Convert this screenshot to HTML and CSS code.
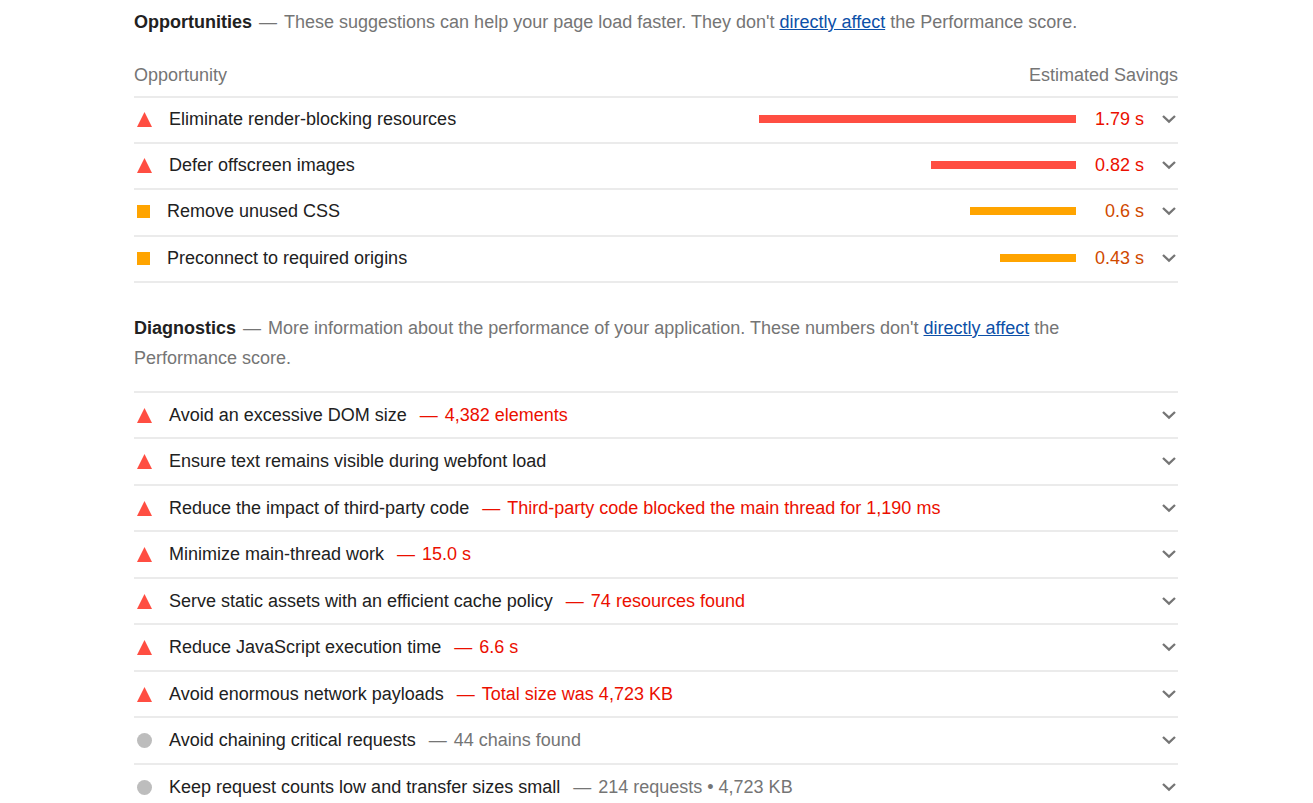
FILE: index.html
```html
<!DOCTYPE html>
<html lang="en">
<head>
<meta charset="utf-8">
<title>Performance audits</title>
<link rel="stylesheet" href="styles.css">
</head>
<body>
<svg width="0" height="0" class="defs" aria-hidden="true">
  <symbol id="chevron" viewBox="0 0 14 10"><path d="M1 2 L7 7.7 L13 2" fill="none" stroke="#757575" stroke-width="2.3"/></symbol>
  <symbol id="fail" viewBox="0 0 15 15"><path d="M7.5 0 L15 15 H0 Z" fill="#ff4e42"/></symbol>
  <symbol id="average" viewBox="0 0 13 13"><path d="M0 0 H13 V13 H0 Z" fill="#ffa400"/></symbol>
  <symbol id="info" viewBox="0 0 15 15"><circle cx="7.5" cy="7.5" r="7.5" fill="#bdbdbd"/></symbol>
</svg>
<main class="report">
  <section class="group">
    <p class="intro"><strong class="group-title">Opportunities</strong><span class="dash">—</span>These suggestions can help your page load faster. They don't <a href="#score">directly affect</a> the Performance score.</p>
    <div class="columns"><span>Opportunity</span><span>Estimated Savings</span></div>
    <ul class="audits opportunities">
      <li><button type="button" class="audit fail" aria-expanded="false"><svg class="mark"><use href="#fail"/></svg><span class="title">Eliminate render-blocking resources</span><span class="track"><span class="bar" style="width:100%"></span></span><span class="savings">1.79 s</span><svg class="chevron"><use href="#chevron"/></svg></button></li>
      <li><button type="button" class="audit fail" aria-expanded="false"><svg class="mark"><use href="#fail"/></svg><span class="title">Defer offscreen images</span><span class="track"><span class="bar" style="width:45.8%"></span></span><span class="savings">0.82 s</span><svg class="chevron"><use href="#chevron"/></svg></button></li>
      <li><button type="button" class="audit average" aria-expanded="false"><svg class="mark"><use href="#average"/></svg><span class="title">Remove unused CSS</span><span class="track"><span class="bar" style="width:33.5%"></span></span><span class="savings">0.6 s</span><svg class="chevron"><use href="#chevron"/></svg></button></li>
      <li><button type="button" class="audit average" aria-expanded="false"><svg class="mark"><use href="#average"/></svg><span class="title">Preconnect to required origins</span><span class="track"><span class="bar" style="width:24%"></span></span><span class="savings">0.43 s</span><svg class="chevron"><use href="#chevron"/></svg></button></li>
    </ul>
  </section>
  <section class="group">
    <p class="intro"><strong class="group-title">Diagnostics</strong><span class="dash">—</span>More information about the performance of your application. These numbers don't <a href="#score">directly affect</a> the Performance score.</p>
    <ul class="audits diagnostics">
      <li><button type="button" class="audit fail" aria-expanded="false"><svg class="mark"><use href="#fail"/></svg><span class="title">Avoid an excessive DOM size<span class="detail"><span class="detail-dash">—</span>4,382 elements</span></span><svg class="chevron"><use href="#chevron"/></svg></button></li>
      <li><button type="button" class="audit fail" aria-expanded="false"><svg class="mark"><use href="#fail"/></svg><span class="title">Ensure text remains visible during webfont load</span><svg class="chevron"><use href="#chevron"/></svg></button></li>
      <li><button type="button" class="audit fail" aria-expanded="false"><svg class="mark"><use href="#fail"/></svg><span class="title">Reduce the impact of third-party code<span class="detail"><span class="detail-dash">—</span>Third-party code blocked the main thread for 1,190 ms</span></span><svg class="chevron"><use href="#chevron"/></svg></button></li>
      <li><button type="button" class="audit fail" aria-expanded="false"><svg class="mark"><use href="#fail"/></svg><span class="title">Minimize main-thread work<span class="detail"><span class="detail-dash">—</span>15.0 s</span></span><svg class="chevron"><use href="#chevron"/></svg></button></li>
      <li><button type="button" class="audit fail" aria-expanded="false"><svg class="mark"><use href="#fail"/></svg><span class="title">Serve static assets with an efficient cache policy<span class="detail"><span class="detail-dash">—</span>74 resources found</span></span><svg class="chevron"><use href="#chevron"/></svg></button></li>
      <li><button type="button" class="audit fail" aria-expanded="false"><svg class="mark"><use href="#fail"/></svg><span class="title">Reduce JavaScript execution time<span class="detail"><span class="detail-dash">—</span>6.6 s</span></span><svg class="chevron"><use href="#chevron"/></svg></button></li>
      <li><button type="button" class="audit fail" aria-expanded="false"><svg class="mark"><use href="#fail"/></svg><span class="title">Avoid enormous network payloads<span class="detail"><span class="detail-dash">—</span>Total size was 4,723 KB</span></span><svg class="chevron"><use href="#chevron"/></svg></button></li>
      <li><button type="button" class="audit info" aria-expanded="false"><svg class="mark"><use href="#info"/></svg><span class="title">Avoid chaining critical requests<span class="detail"><span class="detail-dash">—</span>44 chains found</span></span><svg class="chevron"><use href="#chevron"/></svg></button></li>
      <li><button type="button" class="audit info" aria-expanded="false"><svg class="mark"><use href="#info"/></svg><span class="title">Keep request counts low and transfer sizes small<span class="detail"><span class="detail-dash">—</span>214 requests • 4,723 KB</span></span><svg class="chevron"><use href="#chevron"/></svg></button></li>
    </ul>
  </section>
</main>
</body>
</html>
```
FILE: styles.css
```css
* { box-sizing: border-box; }
html { overflow-x: hidden; scrollbar-width: none; }
body {
  margin: 0;
  background: #fff;
  color: #212121;
  font: 18px/30px "Liberation Sans", Arial, sans-serif;
}
.defs { position: absolute; }
.report { padding: 7px 135px 0 134px; }
.group { margin-bottom: 30px; }
.intro { margin: 0; padding-right: 16px; color: #757575; }
.group-title { color: #212121; }
.dash { margin: 0 7px; }
a { color: #0c50a8; text-decoration: underline; }
.columns {
  display: flex;
  justify-content: space-between;
  margin-top: 23px;
  color: #757575;
}
.audits {
  list-style: none;
  margin: 6px 0 0;
  padding: 0;
  border-top: 2px solid #ebebeb;
}
.diagnostics { margin-top: 18px; }
.audits li { height: 46px; border-bottom: 2px solid #ebebeb; }
.opportunities li:nth-child(3),
.diagnostics li:nth-child(even) { height: 47px; }
.audit {
  display: flex;
  align-items: center;
  width: 100%;
  padding: 6px 2px 7px 3px;
  border: 0;
  background: none;
  color: inherit;
  font: inherit;
  text-align: left;
  cursor: pointer;
}
.diagnostics .audit { padding-top: 7px; }
.mark { flex: none; width: 15px; height: 15px; margin-right: 17px; }
.average .mark { width: 13px; height: 13px; }
.title { flex: 1; }
.detail { margin-left: 13px; }
.detail-dash { margin-right: 7px; }
.fail .detail, .fail .savings { color: #eb0f00; }
.average .savings { color: #d04900; }
.info .detail { color: #757575; }
.track { display: flex; justify-content: flex-end; flex: 0 1 317px; }
.bar { height: 8px; }
.fail .bar { background: #ff4e42; }
.average .bar { background: #ffa400; }
.savings { width: 68px; text-align: right; }
.chevron { flex: none; width: 14px; height: 10px; margin-left: 18px; }
```
